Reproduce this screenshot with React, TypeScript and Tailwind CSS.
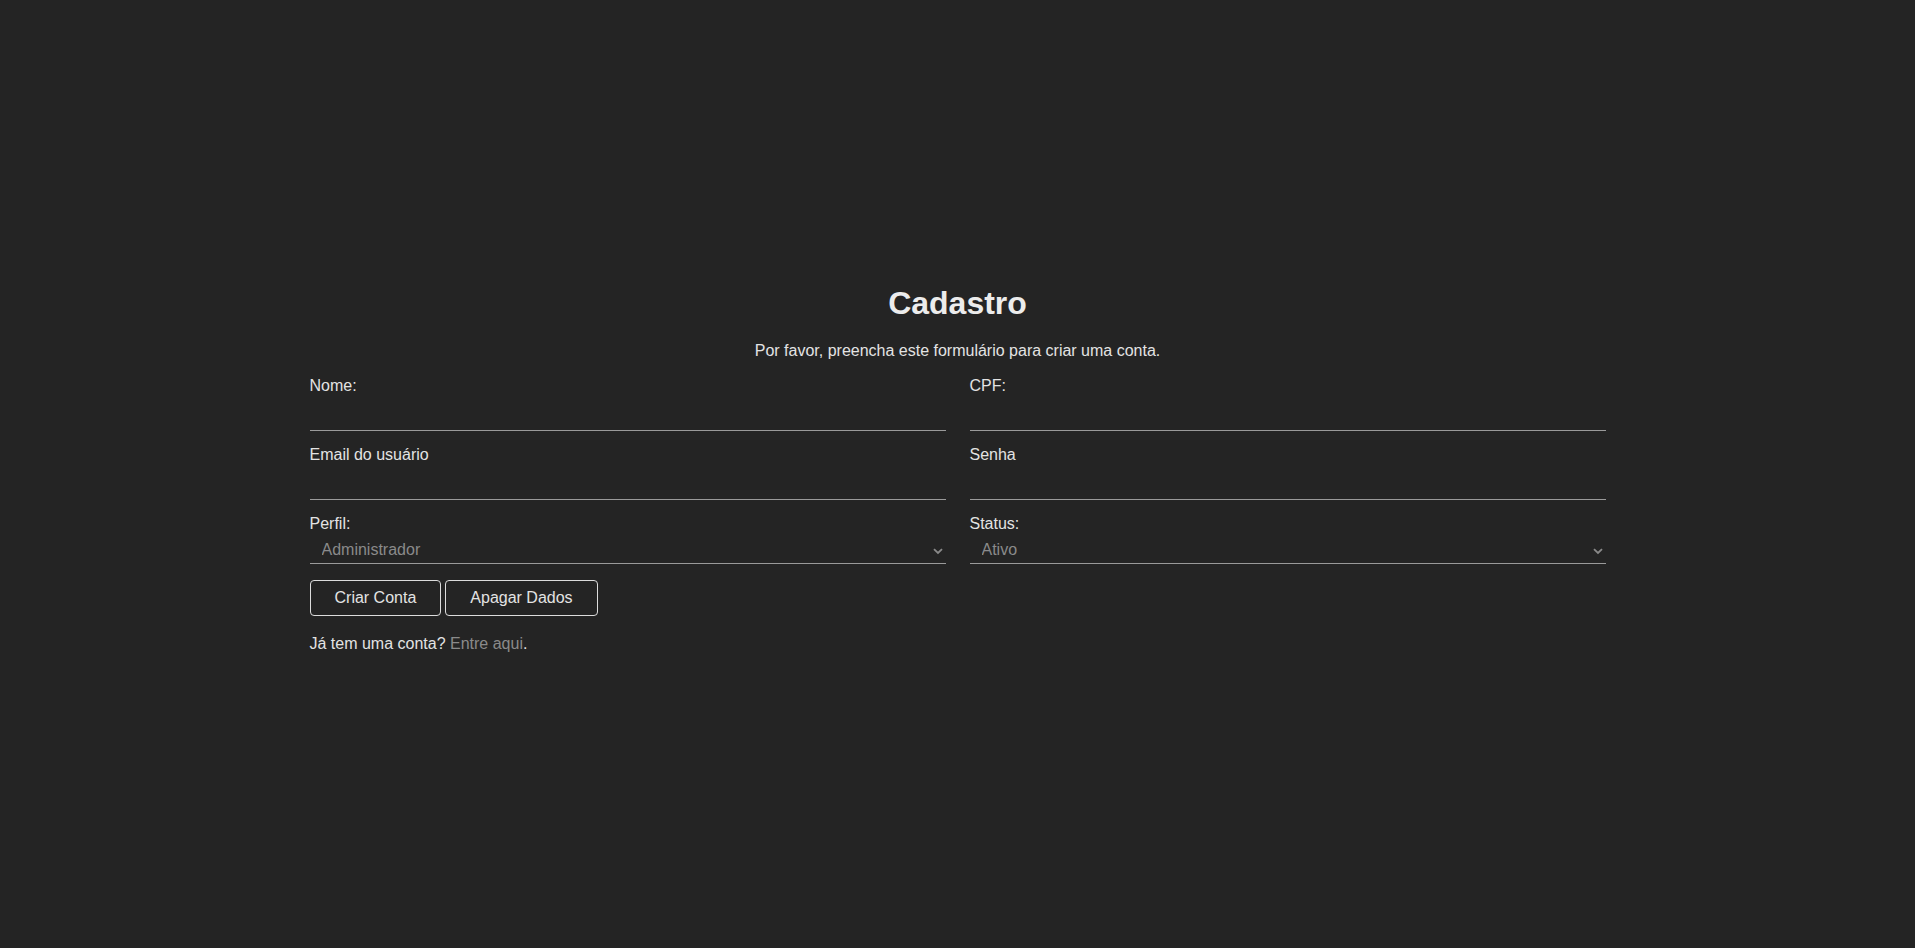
import React, { useState } from 'react';

const Field = ({ label, type = 'text' }: { label: string; type?: string }) => (
  <div className="flex flex-col">
    <label className="pt-[2px] text-[16px] leading-[18px]">{label}</label>
    <input
      type={type}
      className="h-[36px] w-full bg-transparent border-0 border-b border-[#9a9a9a] px-3 text-[16px] text-[#e3e3e3] outline-none"
    />
  </div>
);

const SelectField = ({ label, options }: { label: string; options: string[] }) => (
  <div className="flex flex-col">
    <label className="pt-[2px] text-[16px] leading-[18px]">{label}</label>
    <div className="relative">
      <select className="h-[31px] w-full appearance-none bg-transparent border-0 border-b border-[#9a9a9a] pl-[12px] pt-[3px] text-[16px] text-[#8a8a8a] outline-none">
        {options.map((o) => (
          <option key={o} className="bg-[#242424]">{o}</option>
        ))}
      </select>
      <svg
        className="pointer-events-none absolute right-[3px] top-[15px]"
        width="10"
        height="7"
        viewBox="0 0 10 7"
        fill="none"
      >
        <path d="M1 1.2 L5 5 L9 1.2" stroke="#8a8a8a" strokeWidth="1.8" />
      </svg>
    </div>
  </div>
);

const App = () => {
  const [sent, setSent] = useState(false);

  return (
    <div
      className="min-h-[948px] bg-[#242424] text-[#e3e3e3]"
      style={{ fontFamily: '"Liberation Sans", Arial, sans-serif' }}
    >
      <div className="pt-[285px] w-[1296px] mx-auto">
        <h1 className="text-center text-[32px] leading-[37px] font-bold text-[#ececec]">Cadastro</h1>
        <p className="text-center text-[16px] leading-[18px] mt-[20px]">
          Por favor, preencha este formulário para criar uma conta.
        </p>

        <form
          className="mt-[15px]"
          onSubmit={(e) => {
            e.preventDefault();
            setSent(!sent);
          }}
        >
          <div className="grid grid-cols-2 gap-x-6 gap-y-[13px]">
            <Field label="Nome:" />
            <Field label="CPF:" />
            <Field label="Email do usuário" type="email" />
            <Field label="Senha" type="password" />
            <SelectField label="Perfil:" options={['Administrador', 'Usuário']} />
            <SelectField label="Status:" options={['Ativo', 'Inativo']} />
          </div>

          <div className="flex gap-1 mt-[16px]">
            <button
              type="submit"
              className="h-[36px] px-6 border border-[#dcdcdc] rounded-[4px] bg-transparent text-[16px] leading-[18px] text-[#e3e3e3]"
            >
              Criar Conta
            </button>
            <button
              type="reset"
              className="h-[36px] px-6 border border-[#dcdcdc] rounded-[4px] bg-transparent text-[16px] leading-[18px] text-[#e3e3e3]"
            >
              Apagar Dados
            </button>
          </div>
        </form>

        <p className="mt-[19px] text-[16px] leading-[18px]">
          Já tem uma conta? <a href="#" className="text-[#8a8a8a]">Entre aqui</a>.
        </p>
      </div>
    </div>
  );
};

export default App;
